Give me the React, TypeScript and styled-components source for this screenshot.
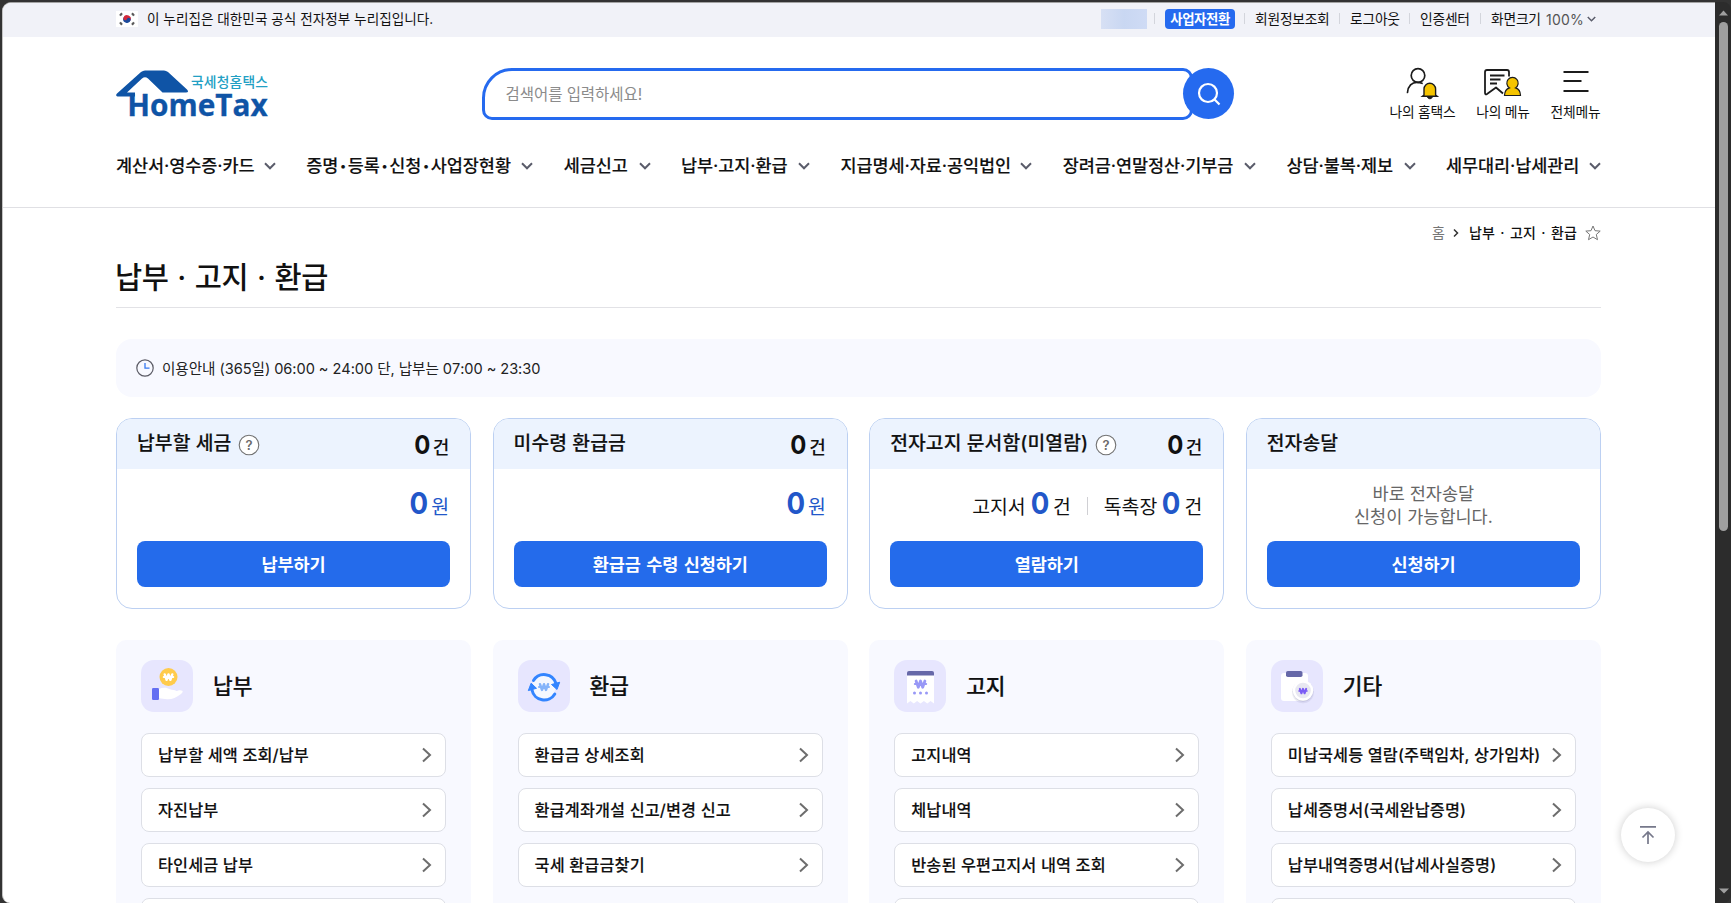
import React from 'react';
import styled, { createGlobalStyle } from 'styled-components';

const Global = createGlobalStyle`
  *, *::before, *::after { box-sizing: border-box; }
  html, body { margin: 0; height: 100%; background: #333333; }
  body {
    font-family: Inter, 'Noto Sans CJK KR', sans-serif;
    color: #111; overflow: hidden;
    font-kerning: none;
  }
  #root { height: 100%; }
  a { color: inherit; text-decoration: none; }
  button { font: inherit; border: 0; padding: 0; cursor: pointer; }
  svg { display: block; flex: none; }
`;

const Frame = styled.div`
  display: flex;
  height: 903px;
  width: 1731px;
  padding: 2px 0 0 2px;
  background: #333333;
`;
const Page = styled.div`
  position: relative;
  width: 1713px;
  height: 901px;
  overflow: hidden;
  background: #fff;
  border-top: 1px solid #a3a3a3;
  border-left: 1px solid #c4c4c4;
  border-radius: 9px 0 0 8px;
`;
const Scrollbar = styled.div`
  width: 16px;
  display: flex;
  flex-direction: column;
  align-items: center;
  justify-content: space-between;
  padding: 8px 0 9px 1px;
  background: #2c2c2c;
  border-radius: 0 8px 8px 0;
`;
const Thumb = styled.div`
  width: 9px;
  height: 509px;
  margin: 6px 0 auto;
  border-radius: 5px;
  background: #9f9f9f;
`;
const Inner = styled.div`
  width: 1485px;
  margin-left: 113px;
`;

/* ---------- top strip ---------- */
const TopBar = styled.div`
  height: 34px;
  background: #f1f2f8;
`;
const TopInner = styled(Inner)`
  height: 34px;
  display: flex;
  align-items: center;
  justify-content: space-between;
  padding-bottom: 3px;
`;
const Official = styled.div`
  display: flex;
  align-items: center;
  gap: 9px;
  font-size: 13.6px;
  letter-spacing: 0.02px;
  span { padding-bottom: 2px; }
`;
const Utils = styled.div`
  display: flex;
  align-items: center;
  margin-right: 5px;
`;
const UserChip = styled.span`
  width: 46px;
  height: 20px;
  background: linear-gradient(90deg, #d7e0f4, #c9d7f2 50%, #cfdbf5);
`;
const Util = styled.a<{ $w: number }>`
  width: ${p => p.$w}px;
  padding-bottom: 2px;
  font-size: 13.8px;
  letter-spacing: -0.3px;
  white-space: nowrap;
`;
const UtilLine = styled.i<{ $l: number; $r: number }>`
  width: 1px;
  height: 11px;
  margin: 0 ${p => p.$r}px 0 ${p => p.$l}px;
  background: #d3d5dc;
`;
const SwitchBadge = styled.button`
  width: 70px;
  height: 20px;
  border-radius: 4px;
  background: #256aef;
  color: #fff;
  font-size: 13.4px;
  line-height: 20px;
  font-weight: 700;
  letter-spacing: -0.4px;
`;
const Zoom = styled.span`
  display: flex;
  align-items: center;
  gap: 3px;
  padding-top: 2px;
  font-size: 14px;
  letter-spacing: 0.2px;
  color: #555;
`;

/* ---------- header ---------- */
const Header = styled.header`
  height: 171px;
  border-bottom: 1px solid #e0e0e4;
`;
const Brand = styled(Inner)`
  height: 100px;
  display: flex;
  align-items: flex-start;
`;
const LogoLink = styled.a`
  width: 366px;
  padding-top: 33px;
  svg { overflow: visible; }
`;
const Search = styled.form`
  display: flex;
  padding-top: 31px;
  margin: 0;
`;
const SearchField = styled.div`
  width: 711px;
  height: 52px;
  display: flex;
  align-items: center;
  padding: 0 0 3px 20.5px;
  border: 3px solid #256aef;
  border-radius: 30px 10px 10px 10px;
  color: #8b8b8b;
  font-size: 15.5px;
  letter-spacing: -0.05px;
`;
const SearchButton = styled.button`
  width: 51px;
  height: 51px;
  margin-left: -10px;
  border-radius: 50%;
  background: #256aef;
  display: flex;
  align-items: center;
  justify-content: center;
`;
const Shortcuts = styled.nav`
  display: flex;
  margin-left: auto;
  padding-top: 29px;
  gap: 20px;
`;
const Shortcut = styled.a<{ $w: number }>`
  width: ${p => p.$w}px;
  display: flex;
  flex-direction: column;
  align-items: center;
  font-size: 13.8px;
  line-height: 20px;
  letter-spacing: -0.2px;
  white-space: nowrap;
  svg { margin-bottom: 2px; }
`;
const Gnb = styled(Inner)`
  display: flex;
  justify-content: space-between;
  padding-top: 16px;
`;
const GnbItem = styled.a<{ $w: number }>`
  width: ${p => p.$w}px;
  height: 26px;
  display: flex;
  align-items: center;
  justify-content: space-between;
  font-size: 17.5px;
  font-weight: 500;
  -webkit-text-stroke: 0.1px;
  letter-spacing: -0.08px;
  white-space: nowrap;
  > span { padding-bottom: 3px; }
`;
const Bullet = styled.small`
  padding: 0 1.7px;
  font-size: 11.5px;
  line-height: 1;
  vertical-align: 2px;
`;

/* ---------- page head ---------- */
const Crumbs = styled.div`
  display: flex;
  justify-content: flex-end;
  align-items: center;
  height: 20px;
  margin-top: 15px;
  font-size: 14px;
`;
const CrumbHome = styled.span`
  padding-bottom: 2px;
  color: #767676;
`;
const CrumbHere = styled.b`
  font-weight: 500;
  letter-spacing: 0.15px;
  word-spacing: 1.4px;
  padding-bottom: 2px;
  margin: 0 8px 0 10px;
`;
const Title = styled.h1`
  margin: 0;
  height: 65px;
  padding-top: 15px;
  border-bottom: 1px solid #e2e2e6;
  font-size: 29.5px;
  line-height: 38px;
  font-weight: 500;
  letter-spacing: -0.4px;
  word-spacing: 1.4px;
  text-indent: -1px;
`;
const Notice = styled.div`
  display: flex;
  align-items: center;
  gap: 8px;
  height: 58px;
  margin-top: 31px;
  padding: 0 0 1px 20px;
  border-radius: 16px;
  background: #f8f9ff;
  color: #222;
  font-size: 14.6px;
  letter-spacing: -0.06px;
`;

/* ---------- summary cards ---------- */
const Columns = styled.div`
  display: grid;
  grid-template-columns: repeat(4, 1fr);
  column-gap: 21.4px;
`;
const Cards = styled(Columns)`
  margin-top: 21px;
`;
const Card = styled.section`
  height: 191px;
  border: 1px solid #bcd0f2;
  border-radius: 16px;
  overflow: hidden;
  padding-bottom: 21px;
  display: flex;
  flex-direction: column;
`;
const CardHead = styled.div`
  height: 50px;
  padding: 0 21px 0 20px;
  display: flex;
  align-items: center;
  background: #ecf3fe;
`;
const CardTitle = styled.h2`
  margin: 0 7px 3px 0;
  font-size: 19.3px;
  line-height: 26px;
  font-weight: 500;
  -webkit-text-stroke: 0.15px;
  letter-spacing: 0.1px;
  white-space: nowrap;
`;
const HeadCount = styled.div`
  margin-left: auto;
  padding-top: 2px;
  display: flex;
  align-items: baseline;
  gap: 3px;
  font-size: 18px;
  font-weight: 500;
  b {
    font-size: 26px;
    font-weight: 700;
    line-height: 30px;
    letter-spacing: -0.6px;
    transform: scaleX(0.92);
    transform-origin: right;
  }
`;
const CardBody = styled.div`
  flex: 1;
  display: flex;
  align-items: center;
  justify-content: flex-end;
  padding: 0 21px;
`;
const Amount = styled.div<{ $blue?: boolean }>`
  display: flex;
  align-items: baseline;
  gap: 4px;
  font-size: 19.4px;
  line-height: 36px;
  color: ${p => (p.$blue ? '#2257c9' : '#111')};
  b {
    font-size: 30px;
    font-weight: 700;
    letter-spacing: -1px;
    color: #2257c9;
    transform: scaleX(0.92);
    transform-origin: ${p => (p.$blue ? 'right' : 'center')};
  }
`;
const AmountLine = styled.i`
  width: 1px;
  height: 18px;
  margin: 2px 16px 0 16px;
  background: #d0d0d4;
`;
const CardMessage = styled.p`
  margin: 0 auto;
  padding-bottom: 1px;
  color: #666;
  text-align: center;
  font-size: 17.5px;
  line-height: 23px;
`;
const Action = styled.button`
  height: 46px;
  margin: 0 20px;
  padding-bottom: 2px;
  border-radius: 8px;
  background: #246beb;
  color: #fff;
  font-size: 17.5px;
  font-weight: 700;
  letter-spacing: -0.1px;
  word-spacing: 1.4px;
`;

/* ---------- menu panels ---------- */
const Panels = styled(Columns)`
  margin-top: 31px;
`;
const Panel = styled.section`
  height: 420px;
  padding: 20px 25px;
  border-radius: 10px;
  background: #f8f9ff;
`;
const PanelHead = styled.div`
  display: flex;
  align-items: center;
  gap: 20px;
  margin-bottom: 21px;
`;
const PanelIcon = styled.span`
  width: 52px;
  height: 52px;
  border-radius: 13px;
  background: #e7e6fe;
`;
const PanelTitle = styled.h3`
  margin: 0;
  padding-bottom: 1px;
  font-size: 21.4px;
  line-height: 28px;
  font-weight: 500;
  -webkit-text-stroke: 0.2px;
`;
const PanelLink = styled.a`
  display: flex;
  align-items: center;
  justify-content: space-between;
  height: 44px;
  margin-bottom: 11px;
  padding: 0 13px 0 16px;
  border: 1px solid #dddfe6;
  border-radius: 8px;
  background: #fff;
  font-size: 16.3px;
  font-weight: 500;
  -webkit-text-stroke: 0.1px;
  letter-spacing: 0.12px;
  white-space: nowrap;
  span { padding-bottom: 3px; }
`;
const TopButton = styled.button`
  position: absolute;
  left: 1618px;
  top: 805px;
  width: 54px;
  height: 54px;
  border-radius: 50%;
  background: #fff;
  box-shadow: 0 0 8px rgba(0, 0, 0, 0.2);
  display: flex;
  align-items: center;
  justify-content: center;
`;

const Down = ({ w = 12, color = '#5b5d6b' }: { w?: number; color?: string }) => (
  <svg width={w} height={w * 0.67} viewBox="0 0 12 8" fill="none" stroke={color} strokeWidth="2">
    <path d="M1 1.2l5 5 5-5" />
  </svg>
);
const Right = () => (
  <svg width="10" height="16" viewBox="0 0 10 16" fill="none" stroke="#6d6d6d" strokeWidth="2">
    <path d="M1 1.5L8 8l-7 6.5" />
  </svg>
);
const HelpIcon = styled.svg`
  margin-top: 2px;
`;
const Help = () => (
  <HelpIcon width="22" height="22" viewBox="0 0 22 22">
    <circle cx="11" cy="11" r="9.8" fill="#fff" stroke="#717171" strokeWidth="1.1" />
    <text x="11" y="15.6" textAnchor="middle" fontSize="13" fontWeight="600" fill="#6b6b6b">?</text>
  </HelpIcon>
);
const Flag = () => (
  <svg width="22" height="16" viewBox="0 0 22 16">
    <rect width="22" height="16" fill="#fff" />
    <g transform="rotate(25 11 8)">
      <path d="M7.2 8a3.8 3.8 0 0 1 7.6 0z" fill="#d4293b" />
      <path d="M7.2 8a3.8 3.8 0 0 0 7.6 0z" fill="#1b4a9c" />
      <circle cx="9.1" cy="8" r="1.9" fill="#d4293b" />
      <circle cx="12.9" cy="8" r="1.9" fill="#1b4a9c" />
    </g>
    <g stroke="#5a5a5a" strokeWidth="2.2">
      <path d="M4 4.6l2-2.4M16 2.2l2 2.4M4 11.4l2 2.4M16 13.8l2-2.4" />
    </g>
  </svg>
);
const Logo = () => (
  <svg width="154" height="50" viewBox="0 0 154 50">
    <path d="M25 2Q27 .4 29 .4H48Q50 .4 52 2L71 19.500Q73.500 22.500 70 22.500H46.500L32 8.500Q29 6 26 8.500L11 22.500H19V26.500H1.500Q-1 25.500 1 23.500Z" fill="#0f54a6" />
    <text x="75" y="17" fontSize="13.8" textLength="77" lengthAdjust="spacing" fontFamily="'Noto Sans CJK KR', sans-serif" fontWeight="500" fill="#22a0c4">국세청홈택스</text>
    <text x="11.3" y="46.2" fontSize="30" textLength="140.5" lengthAdjust="spacingAndGlyphs" fontFamily="'Open Sans', 'Noto Sans', sans-serif" fontWeight="700" fill="#0f54a6" stroke="#0f54a6" strokeWidth="0.3">HomeTax</text>
  </svg>
);
const MyHome = () => (
  <svg width="36" height="34" viewBox="0 0 36 34" fill="none" stroke="#1c1c1c" strokeWidth="1.7">
    <circle cx="13" cy="9.5" r="6.800" />
    <path d="M2.500 26.500C3 20 7 16.300 12 16.300c2 0 3.500.3 5 1" strokeLinecap="round" />
    <path d="M19 29V23a5.800 5.800 0 0 1 11.600 0V29l1.600 1.300H17.400z" fill="#f5c400" strokeWidth="1.400" />
    <path d="M22.500 31a2.500 2.500 0 0 0 4.800 0z" fill="#1c1c1c" strokeWidth="1" />
  </svg>
);
const MyMenu = () => (
  <svg width="42" height="34" viewBox="0 0 42 34" fill="none" stroke="#1c1c1c" strokeWidth="1.8">
    <path d="M27 10.500V6Q27 4 25 4H5Q3 4 3 6V26.500Q3 29.300 5 28L14 21.500L21 27.500" strokeLinejoin="round" />
    <path d="M8 9.500h14.500M8 13.500h10.500M8 17.500h7" />
    <path d="M22.500 29.500c.2-5 3-7 5-7.600a5.700 5.700 0 1 1 6 0c2 .6 4.900 2.600 5 7.600z" fill="#f5c400" strokeWidth="1.200" />
  </svg>
);
const AllMenu = () => (
  <svg width="26" height="34" viewBox="0 0 26 34" stroke="#1c1c1c" strokeWidth="2">
    <path d="M.5 6h25M.5 15h18M.5 25h25" />
  </svg>
);
const Won = ({ x, y, s, color }: { x: number; y: number; s: number; color: string }) => (
  <g transform={`translate(${x} ${y}) scale(${s})`} stroke={color} fill="none" strokeWidth="2.800" strokeLinejoin="round" strokeLinecap="round">
    <path d="M-4.400-3l2.200 6.200L0-3l2.200 6.200L4.400-3" />
    <path d="M-5.600 0H5.600" strokeWidth="2.200" />
  </g>
);

const icons: Record<string, React.ReactNode> = {
  pay: (
    <svg width="52" height="52" viewBox="0 0 52 52">
      <circle cx="27.500" cy="17" r="9" fill="#ffcb4c" />
      <Won x={27.500} y={17} s={0.86} color="#fff" />
      <rect x="11" y="28" width="7" height="12" rx="1.200" fill="#646ff2" />
      <path d="M18 29c4-2 8-1.500 11 .3 2 .9 5 .5 6.300 1.700 1-.2 4-1.700 6-.2.900.9.200 2.200-1.300 3.100C35 37.500 31 39.500 26 39.200L18 38.300z" fill="#fff" />
    </svg>
  ),
  refund: (
    <svg width="52" height="52" viewBox="0 0 52 52">
      <circle cx="26" cy="27" r="11.500" fill="#f5f8ff" />
      <g fill="none" stroke="#3385ff" strokeWidth="3" strokeLinecap="round">
        <path d="M15.500 20.500A12.400 12.400 0 0 1 38 23.500" />
        <path d="M36.800 34A12.400 12.400 0 0 1 14 30" />
      </g>
      <path d="M33.500 24.500l8.200-2.300-2.700 7.300zM18.500 28.300l-8.200 2.300 2.800-7.400z" fill="#3385ff" stroke="#3385ff" strokeLinejoin="round" />
      <Won x={26} y={27} s={0.9} color="#85b4fa" />
    </svg>
  ),
  bill: (
    <svg width="52" height="52" viewBox="0 0 52 52">
      <path d="M13 14h27v29.500l-3.400-2.500-3.300 2.500-3.400-2.500-3.400 2.500-3.400-2.500-3.300 2.500-3.400-2.500L13 43.500z" fill="#fff" />
      <path d="M13 15.500v-2.500q0-2 2-2h23q2 0 2 2v2.500z" fill="#6668a8" />
      <Won x={26.500} y={24} s={1} color="#9898f6" />
      <g fill="#9898f6"><circle cx="20.500" cy="33" r="1.500" /><circle cx="26.500" cy="33" r="1.500" /><circle cx="32.500" cy="33" r="1.500" /></g>
    </svg>
  ),
  etc: (
    <svg width="52" height="52" viewBox="0 0 52 52">
      <rect x="10" y="13" width="27" height="28" rx="3" fill="#fff" />
      <rect x="15" y="11" width="16.500" height="6" rx="1.800" fill="#6668a8" />
      <circle cx="32" cy="32.200" r="11" fill="#6c6ca0" opacity=".12" />
      <circle cx="32" cy="31.500" r="10.300" fill="#5b5b88" opacity=".18" />
      <circle cx="32" cy="30.500" r="10.300" fill="#fff" />
      <circle cx="32" cy="30.500" r="7.800" fill="#e8e8f1" />
      <Won x={32} y={31} s={0.72} color="#7b5cf5" />
    </svg>
  ),
};

const gnb: [string, number][] = [
  ['계산서·영수증·카드', 160],
  ['증명•등록•신청•사업장현황', 227],
  ['세금신고', 87],
  ['납부·고지·환급', 129],
  ['지급명세·자료·공익법인', 192],
  ['장려금·연말정산·기부금', 193.5],
  ['상담·불복·제보', 129],
  ['세무대리·납세관리', 155],
];

const panels = [
  { icon: 'pay', title: '납부', links: ['납부할 세액 조회/납부', '자진납부', '타인세금 납부', ''] },
  { icon: 'refund', title: '환급', links: ['환급금 상세조회', '환급계좌개설 신고/변경 신고', '국세 환급금찾기'] },
  { icon: 'bill', title: '고지', links: ['고지내역', '체납내역', '반송된 우편고지서 내역 조회', ''] },
  { icon: 'etc', title: '기타', links: ['미납국세등 열람(주택임차, 상가임차)', '납세증명서(국세완납증명)', '납부내역증명서(납세사실증명)', ''] },
];

export default function App() {
  return (
    <Frame>
      <Global />
      <Page>
        <TopBar>
          <TopInner>
            <Official><Flag /><span>이 누리집은 대한민국 공식 전자정부 누리집입니다.</span></Official>
            <Utils>
              <UserChip />
              <UtilLine $l={7} $r={10} />
              <SwitchBadge>사업자전환</SwitchBadge>
              <UtilLine $l={9} $r={10} />
              <Util $w={75}>회원정보조회</Util>
              <UtilLine $l={9} $r={10} />
              <Util $w={50}>로그아웃</Util>
              <UtilLine $l={9} $r={10} />
              <Util $w={50}>인증센터</Util>
              <UtilLine $l={10} $r={10} />
              <Util $w={55}>화면크기</Util>
              <Zoom>100% <Down w={9} /></Zoom>
            </Utils>
          </TopInner>
        </TopBar>

        <Header>
          <Brand>
            <LogoLink><Logo /></LogoLink>
            <Search>
              <SearchField>검색어를 입력하세요!</SearchField>
              <SearchButton type="button">
                <svg width="24" height="24" viewBox="0 0 24 24" fill="none" stroke="#fff" strokeWidth="2.200">
                  <circle cx="11" cy="11" r="9" /><path d="M17.300 17.300L22.500 22.500" />
                </svg>
              </SearchButton>
            </Search>
            <Shortcuts>
              <Shortcut $w={67}><MyHome />나의 홈택스</Shortcut>
              <Shortcut $w={54}><MyMenu />나의 메뉴</Shortcut>
              <Shortcut $w={51}><AllMenu />전체메뉴</Shortcut>
            </Shortcuts>
          </Brand>
          <Gnb>
            {gnb.map(([label, w]) => (
              <GnbItem key={label} $w={w}>
                <span>
                  {label.split('•').map((part, i) => (
                    <React.Fragment key={part}>{i > 0 && <Bullet>•</Bullet>}{part}</React.Fragment>
                  ))}
                </span>
                <Down />
              </GnbItem>
            ))}
          </Gnb>
        </Header>

        <Inner>
          <Crumbs>
            <CrumbHome>홈</CrumbHome>
            <svg width="14" height="10" viewBox="-8 0 14 10" fill="none" stroke="#333" strokeWidth="1.500">
              <path d="M1 1.500L4.500 5 1 8.500" />
            </svg>
            <CrumbHere>납부 · 고지 · 환급</CrumbHere>
            <svg width="16" height="16" viewBox="0 0 16 16" fill="none" stroke="#777" strokeWidth="1" strokeLinejoin="round">
              <path d="M8 1l2 4.700 5.200.4-3.900 3.400 1.200 5.200L8 12l-4.500 2.700 1.200-5.200L.8 6.100 6 5.700z" />
            </svg>
          </Crumbs>
          <Title>납부 · 고지 · 환급</Title>
          <Notice>
            <svg width="18" height="18" viewBox="0 0 18 18" fill="none">
              <circle cx="9" cy="9" r="8.200" stroke="#5c5c66" strokeWidth="1.200" />
              <path d="M9 4v5.200h4.500" stroke="#3578f0" strokeWidth="1.300" />
            </svg>
            이용안내 (365일) 06:00 ~ 24:00 단, 납부는 07:00 ~ 23:30
          </Notice>

          <Cards>
            <Card>
              <CardHead><CardTitle>납부할 세금</CardTitle><Help /><HeadCount><b>0</b>건</HeadCount></CardHead>
              <CardBody><Amount $blue><b>0</b>원</Amount></CardBody>
              <Action>납부하기</Action>
            </Card>
            <Card>
              <CardHead><CardTitle>미수령 환급금</CardTitle><HeadCount><b>0</b>건</HeadCount></CardHead>
              <CardBody><Amount $blue><b>0</b>원</Amount></CardBody>
              <Action>환급금 수령 신청하기</Action>
            </Card>
            <Card>
              <CardHead><CardTitle>전자고지 문서함(미열람)</CardTitle><Help /><HeadCount><b>0</b>건</HeadCount></CardHead>
              <CardBody>
                <Amount>고지서<b>0</b>건</Amount>
                <AmountLine />
                <Amount>독촉장<b>0</b>건</Amount>
              </CardBody>
              <Action>열람하기</Action>
            </Card>
            <Card>
              <CardHead><CardTitle>전자송달</CardTitle></CardHead>
              <CardBody><CardMessage>바로 전자송달<br />신청이 가능합니다.</CardMessage></CardBody>
              <Action>신청하기</Action>
            </Card>
          </Cards>

          <Panels>
            {panels.map(p => (
              <Panel key={p.title}>
                <PanelHead><PanelIcon>{icons[p.icon]}</PanelIcon><PanelTitle>{p.title}</PanelTitle></PanelHead>
                {p.links.map((l, i) => <PanelLink key={i}><span>{l}</span><Right /></PanelLink>)}
              </Panel>
            ))}
          </Panels>
        </Inner>

        <TopButton>
          <svg width="18" height="20" viewBox="0 0 18 20" fill="none" stroke="#76788a" strokeWidth="1.700">
            <path d="M1 1.800h16M9 19V7.500M3.500 12.500L9 7l5.500 5.500" />
          </svg>
        </TopButton>
      </Page>
      <Scrollbar>
        <svg width="9" height="6" viewBox="0 0 9 6"><path d="M0 5.500L4.500 .5 9 5.500z" fill="#9f9f9f" /></svg>
        <Thumb />
        <svg width="10" height="6" viewBox="0 0 10 6"><path d="M0 .5L5 5.500 10 .5z" fill="#9f9f9f" /></svg>
      </Scrollbar>
    </Frame>
  );
}
